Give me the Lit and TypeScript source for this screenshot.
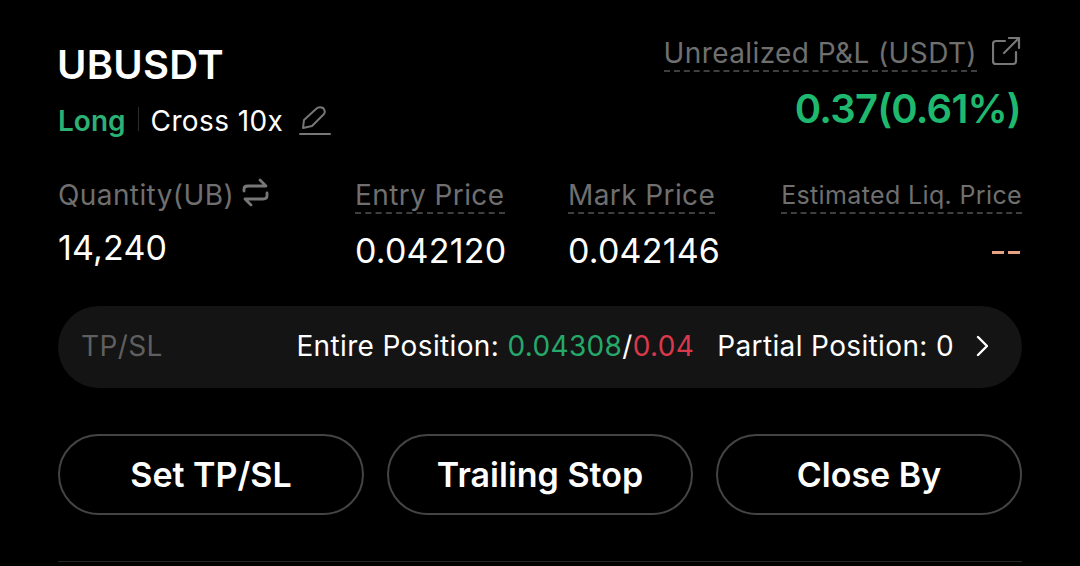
import { LitElement, html, css } from "lit";
import { customElement } from "lit/decorators.js";

@customElement("app-root")
export class AppRoot extends LitElement {
  static styles = css`
    :host { display: block; width: 1080px; height: 566px; background: #000; overflow: hidden; font-family: Inter, "Liberation Sans", sans-serif; color: #fff; }
    .page { box-sizing: border-box; height: 566px; padding: 36px 58px 0; display: flex; flex-direction: column; }
    .head { display: flex; justify-content: space-between; height: 100px; }
    .title { font-size: 40px; line-height: 58px; font-weight: 600; letter-spacing: 0.25px; margin-left: -1px; }
    .sub { display: flex; align-items: center; font-size: 28px; line-height: 40px; margin-top: 7px; letter-spacing: 0.4px; }
    .long { color: #2bb174; font-weight: 600; letter-spacing: 0; }
    .sep { width: 1px; height: 24px; background: #2c2c2c; margin: 0 12px 4px 12px; }
    .edit { margin-left: 16px; display: block; }
    .right { display: flex; flex-direction: column; align-items: flex-end; }
    .pl { display: flex; align-items: flex-start; gap: 15px; }
    .label { color: #6f6f6f; font-size: 28px; line-height: 34px; white-space: nowrap; letter-spacing: 0.4px; }
    .dash { border-bottom: 2px dashed #3f3f3f; }
    .pnl { color: #1fb86f; font-size: 40px; line-height: 52px; font-weight: 600; margin-top: 11px; letter-spacing: -0.8px; margin-right: 1px; }
    .stats { display: grid; grid-template-columns: 297px 213px 1fr auto; margin-top: 42px; height: 106px; }
    .col { display: flex; flex-direction: column; align-items: flex-start; }
    .col.end { align-items: flex-end; }
    .qty { display: flex; align-items: center; gap: 8px; }
    .val { font-size: 34px; line-height: 44px; margin-top: 15px; letter-spacing: 0.2px; }
    .val.q { margin-top: 14px; }
    .liq { font-size: 25px; letter-spacing: 0.36px; }
    .dashes { display: flex; gap: 4px; height: 3px; margin: 37px 2px 0 0; }
    .dashes i { width: 12px; height: 3px; background: #e8a283; }
    .tp { display: flex; align-items: center; box-sizing: border-box; height: 82px; border-radius: 41px; background: #141414; padding: 0 34px 2px 23px; margin-top: 22px; font-size: 28px; letter-spacing: 0.36px; white-space: pre; }
    .tp .name { color: #5f5f5f; margin-right: auto; }
    .g { color: #25a96b; }
    .r { color: #d9394b; }
    .part { margin-left: 23px; }
    .chev { margin-left: 22px; display: block; }
    .btns { display: grid; grid-template-columns: repeat(3, 1fr); gap: 23px; margin-top: 46px; }
    .btn { box-sizing: border-box; height: 81px; border: 2px solid #444; border-radius: 41px; display: flex; align-items: center; justify-content: center; font-size: 34px; font-weight: 600; }
    .rule { height: 1px; background: #262626; margin-top: 46px; }
    svg { fill: none; stroke-linecap: round; stroke-linejoin: round; }
  `;

  render() {
    return html`<div class="page">
      <div class="head">
        <div>
          <div class="title">UBUSDT</div>
          <div class="sub">
            <span class="long">Long</span><span class="sep"></span><span>Cross 10x</span>
            <svg class="edit" width="32" height="30" viewBox="0 0 32 30" stroke="#777" stroke-width="2">
              <path d="M5 14 L17 3 Q20 0 24 2 Q27 5 25 8 L13 20 L4 22 Z"/>
              <path d="M1 28 H31"/>
            </svg>
          </div>
        </div>
        <div class="right">
          <div class="pl">
            <span class="label dash">Unrealized P&L (USDT)</span>
            <svg width="30" height="30" viewBox="0 0 30 30" stroke="#777" stroke-width="2.2" style="margin-top:1px">
              <path d="M13 4 H4 Q1 4 1 7 V24 Q1 27 4 27 H21 Q24 27 24 24 V15"/>
              <path d="M12 16 L27 1 M17 1 H27 V11"/>
            </svg>
          </div>
          <div class="pnl">0.37(0.61%)</div>
        </div>
      </div>
      <div class="stats">
        <div class="col">
          <div class="qty"><span class="label">Quantity(UB)</span>
            <svg width="27" height="30" viewBox="0 0 27 30" stroke="#777" stroke-width="2.8" style="margin-top:-5px">
              <path d="M2 13 V11 Q2 8 6 8 H24 L18 2"/>
              <path d="M25 15 V18 Q25 21 21 21 H3 L9 27"/>
            </svg>
          </div>
          <div class="val q">14,240</div>
        </div>
        <div class="col"><span class="label dash">Entry Price</span><div class="val">0.042120</div></div>
        <div class="col"><span class="label dash">Mark Price</span><div class="val">0.042146</div></div>
        <div class="col end"><span class="label dash liq">Estimated Liq. Price</span><div class="dashes"><i></i><i></i></div></div>
      </div>
      <div class="tp">
        <span class="name">TP/SL</span>
        <span>Entire Position: <span class="g">0.04308</span>/<span class="r">0.04</span></span>
        <span class="part">Partial Position: 0</span>
        <svg class="chev" width="12" height="22" viewBox="0 0 12 22" stroke="#fff" stroke-width="2.4"><path d="M2 2 L11 11 L2 20"/></svg>
      </div>
      <div class="btns">
        <div class="btn">Set TP/SL</div>
        <div class="btn">Trailing Stop</div>
        <div class="btn">Close By</div>
      </div>
      <div class="rule"></div>
    </div>`;
  }
}
